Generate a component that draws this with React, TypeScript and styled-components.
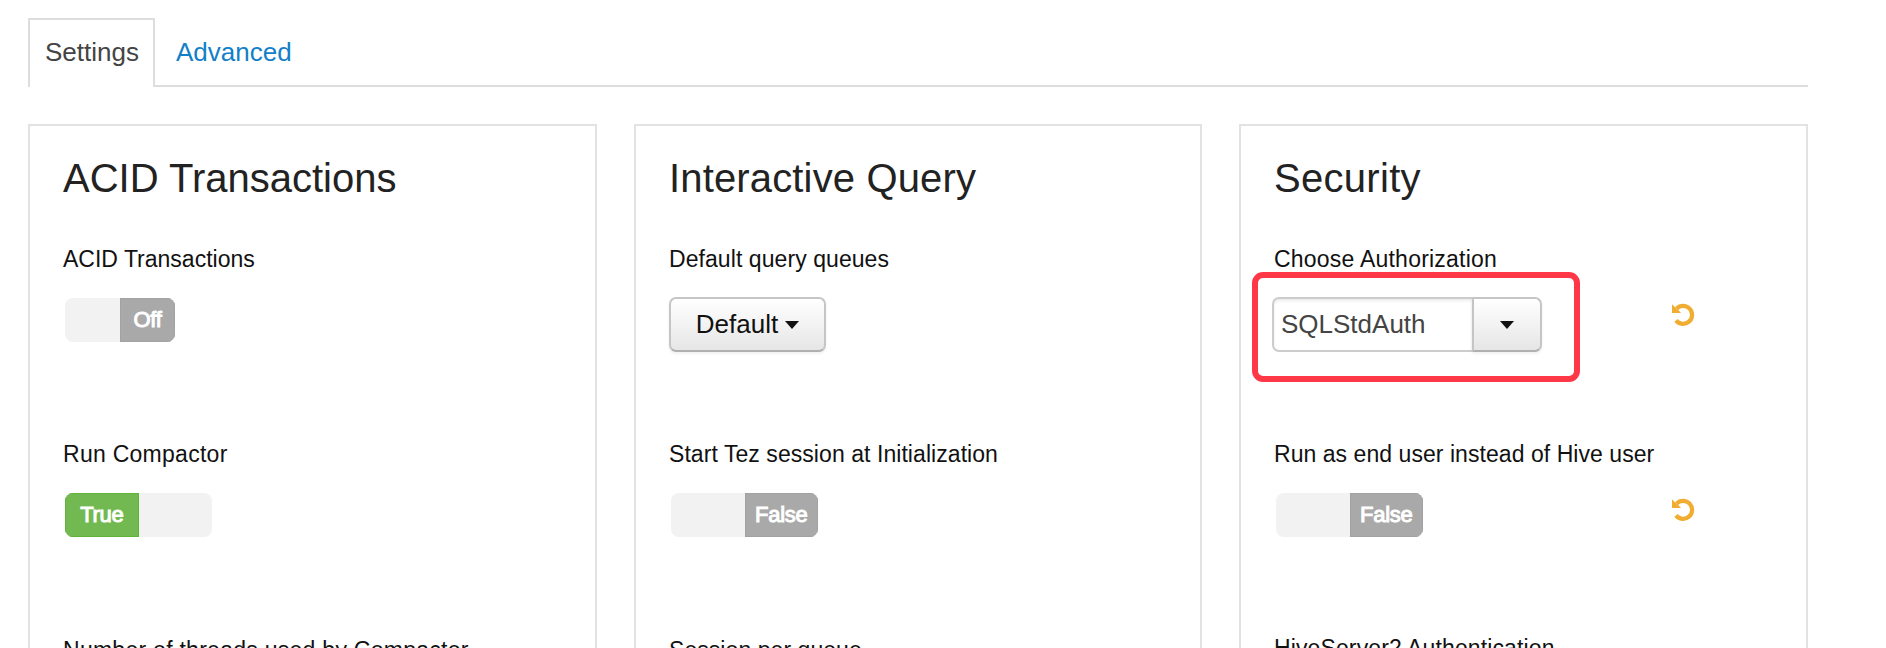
import React from "react";
import styled, { createGlobalStyle } from "styled-components";

const GlobalStyle = createGlobalStyle`
  *, *::before, *::after { box-sizing: border-box; }
  body {
    margin: 0;
    height: 648px;
    overflow: hidden;
    background: #fff;
    color: #111;
    font-family: "Liberation Sans", Arial, Helvetica, sans-serif;
  }
`;

const Page = styled.main`
  height: 648px;
  overflow: hidden;
  padding: 18px 78px 0 28px;
`;

const Tabs = styled.nav`
  display: flex;
  height: 69px;
  border-bottom: 2px solid #ddd;
`;

const Tab = styled.a<{ $active?: boolean }>`
  height: 69px;
  padding: 0 15px;
  border: 2px solid ${(p) => (p.$active ? "#ddd" : "transparent")};
  border-bottom: 0;
  background: ${(p) => (p.$active ? "#fff" : "transparent")};
  color: ${(p) => (p.$active ? "#444" : "#1280c8")};
  font-size: 26px;
  line-height: 65px;
  width: ${(p) => (p.$active ? "127px" : "auto")};
  margin-right: 4px;
  white-space: nowrap;
`;

const Cards = styled.section`
  display: grid;
  grid-template-columns: 569px 568px 569px;
  justify-content: space-between;
  margin-top: 37px;
`;

const Card = styled.article`
  height: 560px;
  padding: 29px 33px;
  border: 2px solid #e2e2e2;
`;

const Title = styled.h2<{ $spacing?: number }>`
  margin: 0 0 44px;
  height: 46px;
  color: #222;
  font-size: 40px;
  font-weight: 400;
  line-height: 46px;
  letter-spacing: ${(p) => p.$spacing ?? 0}px;
  white-space: nowrap;
`;

const Setting = styled.div<{ $height?: number }>`
  height: ${(p) => p.$height ?? 195}px;
`;

const Label = styled.div<{ $spacing?: number }>`
  height: 28px;
  font-size: 23px;
  line-height: 28px;
  letter-spacing: ${(p) => p.$spacing ?? 0}px;
  white-space: nowrap;
`;

const Control = styled.div`
  display: flex;
  align-items: flex-start;
  position: relative;
  margin-top: 24px;
  height: 54px;
`;

const Switch = styled.div<{ $width: number }>`
  display: grid;
  grid-template-columns: 1fr 1fr;
  width: ${(p) => p.$width}px;
  height: 44px;
  margin: 1px 0 0 2px;
  border-radius: 8px;
  overflow: hidden;
  background: #f2f2f2;
`;

const SwitchSide = styled.span<{ $on?: boolean }>`
  grid-column: ${(p) => (p.$on ? 1 : 2)};
  background: ${(p) => (p.$on ? "#72b952" : "#a9a9a9")};
  box-shadow: inset 0 0 0 1px ${(p) => (p.$on ? "#5fb336" : "#a2a2a2")};
  color: #fff;
  font-size: 22px;
  line-height: 43px;
  letter-spacing: -0.3px;
  text-align: center;
  -webkit-text-stroke: 1px #fff;
`;

const Button = styled.button<{ $attached?: boolean }>`
  display: flex;
  align-items: center;
  justify-content: center;
  gap: 7px;
  width: ${(p) => (p.$attached ? "70px" : "157px")};
  height: 55px;
  margin: 0 0 0 ${(p) => (p.$attached ? "-2px" : "0")};
  padding: 0;
  border: 2px solid #c5c5c5;
  border-bottom-color: #b0b0b0;
  border-radius: ${(p) => (p.$attached ? "0 7px 7px 0" : "7px")};
  background: linear-gradient(#fff, #e6e6e6);
  box-shadow: 0 2px 3px rgba(0, 0, 0, 0.06);
  color: #111;
  font: 26px "Liberation Sans", Arial, sans-serif;
`;

const Caret = styled.span`
  border: 7px solid transparent;
  border-top: 8px solid #111;
  border-bottom: 0;
`;

const Input = styled.input`
  width: 202px;
  height: 55px;
  margin: 0 0 0 -2px;
  padding: 0 8px 0 7px;
  border: 2px solid #ccc;
  border-radius: 7px 0 0 7px;
  box-shadow: inset 0 2px 3px rgba(0, 0, 0, 0.08);
  color: #444;
  font: 26px "Liberation Sans", Arial, sans-serif;
`;

const Highlight = styled.div`
  position: absolute;
  left: -22px;
  top: -25px;
  width: 328px;
  height: 110px;
  border: 6px solid #ff3847;
  border-radius: 11px;
  pointer-events: none;
`;

const UndoIcon = styled.svg`
  position: absolute;
  left: 398px;
  top: 6px;
  width: 24px;
  height: 24px;
`;

const Undo = () => (
  <UndoIcon viewBox="0 0 24 24" aria-label="Undo">
    <path d="M4.6 5.6A9 9 0 1 1 4 17.4" fill="none" stroke="#f0ad32" strokeWidth="4.2" />
    <path d="M0 1.2V10H9L6.6 7.2L3 4.2Z" fill="#f0ad32" />
  </UndoIcon>
);

export default function App() {
  return (
    <Page>
      <GlobalStyle />
      <Tabs>
        <Tab $active>Settings</Tab>
        <Tab>Advanced</Tab>
      </Tabs>
      <Cards>
        <Card>
          <Title>ACID Transactions</Title>
          <Setting>
            <Label>ACID Transactions</Label>
            <Control><Switch $width={110}><SwitchSide>Off</SwitchSide></Switch></Control>
          </Setting>
          <Setting $height={196}>
            <Label $spacing={0.27}>Run Compactor</Label>
            <Control><Switch $width={147}><SwitchSide $on>True</SwitchSide></Switch></Control>
          </Setting>
          <Label $spacing={0.27}>Number of threads used by Compactor</Label>
        </Card>
        <Card>
          <Title $spacing={0.15}>Interactive Query</Title>
          <Setting>
            <Label $spacing={0.07}>Default query queues</Label>
            <Control><Button>Default<Caret /></Button></Control>
          </Setting>
          <Setting $height={196}>
            <Label $spacing={0.06}>Start Tez session at Initialization</Label>
            <Control><Switch $width={147}><SwitchSide>False</SwitchSide></Switch></Control>
          </Setting>
          <Label $spacing={0.06}>Session per queue</Label>
        </Card>
        <Card>
          <Title $spacing={0.3}>Security</Title>
          <Setting>
            <Label $spacing={0.22}>Choose Authorization</Label>
            <Control>
              <Input defaultValue="SQLStdAuth" />
              <Button $attached aria-label="Choose"><Caret /></Button>
              <Highlight />
              <Undo />
            </Control>
          </Setting>
          <Setting $height={194}>
            <Label $spacing={0.05}>Run as end user instead of Hive user</Label>
            <Control>
              <Switch $width={147}><SwitchSide>False</SwitchSide></Switch>
              <Undo />
            </Control>
          </Setting>
          <Label $spacing={0.12}>HiveServer2 Authentication</Label>
        </Card>
      </Cards>
    </Page>
  );
}
